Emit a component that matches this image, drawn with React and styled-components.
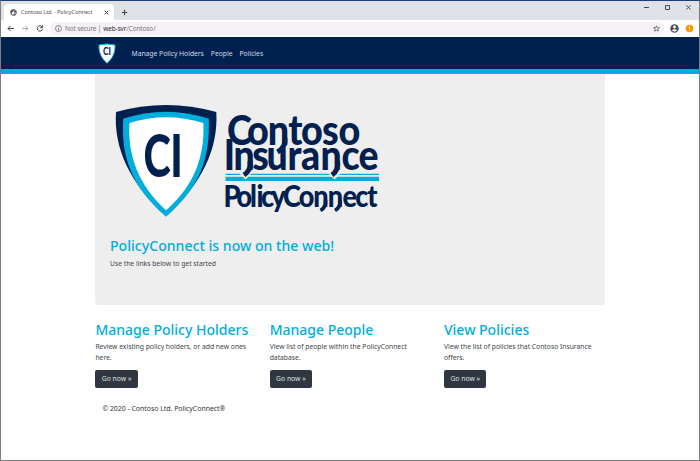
import React from 'react';
import styled, { createGlobalStyle } from 'styled-components';

const NAVY = '#00204f';
const CYAN = '#00addc';

const Global = createGlobalStyle`
  * { box-sizing: border-box; }
  body { margin: 0; background: #fff; font-family: "Noto Sans", "Open Sans", sans-serif; }
`;

const Window = styled.div`
  width: 700px;
  height: 461px;
  overflow: hidden;
  background: #fff;
  border: 1px solid #7d7d7d;
  border-top-color: #1d3e72;
`;

const TabStrip = styled.div`
  height: 19px;
  background: #dee1e6;
  display: flex;
  align-items: flex-end;
  padding-left: 3px;
`;

const Tab = styled.div`
  width: 110px;
  height: 16px;
  background: #fff;
  border-radius: 4px 4px 0 0;
  display: flex;
  align-items: center;
  padding: 0 5px 0 6px;
`;

const TabTitle = styled.span`
  flex: 1;
  margin-left: 4px;
  font-size: 5.6px;
  letter-spacing: -0.12px;
  line-height: 8px;
  color: #50545a;
  white-space: nowrap;
`;

const NewTab = styled.div`
  display: flex;
  align-items: center;
  height: 16px;
  margin-left: 7px;
`;

const WindowControls = styled.div`
  margin-left: auto;
  align-self: flex-start;
  display: flex;
  gap: 16px;
  padding: 3px 8px 0 0;
`;

const Toolbar = styled.div`
  height: 17px;
  display: flex;
  align-items: center;
  padding: 0 5px 0 6px;
`;

const NavIcons = styled.div`
  display: flex;
  gap: 7.5px;
  margin-right: 6px;
`;

const Address = styled.div`
  flex: 1;
  height: 13px;
  border-radius: 7px;
  background: #f5f1f5;
  display: flex;
  align-items: center;
  padding: 0 4px 0 5px;
  font-size: 6.4px;
  line-height: 10px;
  color: #77757a;
  white-space: nowrap;
`;

const Security = styled.span`
  margin-left: 3px;
  padding-right: 3px;
  border-right: 1px solid #b9b6ba;
  line-height: 8px;
  letter-spacing: -0.12px;
`;

const Url = styled.span`
  flex: 1;
  margin-left: 3px;
  letter-spacing: -0.07px;
`;

const Host = styled.span`
  color: #2b2b30;
`;

const ToolbarActions = styled.div`
  display: flex;
  gap: 6px;
  margin-left: 6px;
`;

const SiteHeader = styled.header`
  height: 37px;
  background: ${NAVY};
  border-bottom: 5px solid ${CYAN};
  display: flex;
  align-items: center;
  padding-left: 97px;
`;

const SiteNav = styled.nav`
  display: flex;
  gap: 7px;
  margin: 1px 0 0 15.5px;
`;

const NavLink = styled.a`
  color: #d5dbe5;
  font-size: 6.8px;
  line-height: 12px;
  letter-spacing: -0.03px;
  white-space: nowrap;
`;

const Container = styled.main`
  width: 510px;
  margin-left: 94px;
`;

const Hero = styled.section`
  height: 231px;
  background: #eee;
  border-radius: 0 0 3px 3px;
  padding: 28px 15px 0 15px;
`;

const HeroTitle = styled.h1`
  margin: 19px 0 0;
  font-size: 14.1px;
  line-height: 18px;
  font-weight: 500;
  color: ${CYAN};
  white-space: nowrap;
`;

const Body = styled.p`
  margin: 0;
  font-size: 6.8px;
  line-height: 11px;
  letter-spacing: -0.02px;
  color: #42464b;
  white-space: nowrap;
`;

const HeroBody = styled(Body)`
  margin-top: 3px;
`;

const Columns = styled.div`
  display: grid;
  grid-template-columns: 174.3px 174.3px 1fr;
  margin-top: 16px;
  padding-left: 0.4px;
`;

const CardTitle = styled.h2`
  margin: 0 0 2px;
  font-size: 14px;
  line-height: 18px;
  font-weight: 500;
  color: ${CYAN};
  white-space: nowrap;
`;

const Button = styled.button`
  display: block;
  width: 42.4px;
  height: 18px;
  margin-top: 7px;
  padding: 0;
  border: 0;
  border-radius: 2px;
  background: #303741;
  color: #dfe1e4;
  font-family: inherit;
  font-size: 6.8px;
  line-height: 18px;
`;

const Footer = styled.footer`
  margin: 15px 0 0 7.4px;
  font-size: 6.9px;
  line-height: 11px;
  color: #303338;
  white-space: nowrap;
`;

const LogoSvg = styled.svg`
  display: block;
  overflow: visible;
  margin-left: 2px;
`;

const Globe = () => (
  <svg width="7" height="7" viewBox="0 0 14 14">
    <circle cx="7" cy="7" r="6" fill="#fff" stroke="#50545a" strokeWidth="1.6" />
    <path d="M1 6 2 3 6 1 8 3 6 6 3 7 4 10 3 11ZM9 1 13 6 10 8 8 6ZM7 9h5l-3 4H7Z" fill="#50545a" />
  </svg>
);

const Line = ({ d, w = 7, h = 7, c = '#44484d', s = 1 }) => (
  <svg width={w} height={h} viewBox={`0 0 ${w} ${h}`} fill="none" stroke={c} strokeWidth={s}>
    <path d={d} />
  </svg>
);

const SmallShield = () => (
  <svg width="18" height="21" viewBox="0 0 18 21">
    <path d="M1 2Q9 0 17 2C17.4 10 14 16 9 20.3C4 16 .6 10 1 2Z" fill="#fff" stroke={CYAN} strokeWidth="1" />
    <text x="4.9" y="12.1" fontFamily="Lato" fontWeight="700" fontSize="10.8" textLength="8" lengthAdjust="spacingAndGlyphs" fill={NAVY}>CI</text>
  </svg>
);

/* A word of the wordmark: each letter is centred on its own x. */
const Word = ({ children, y, size, squeeze, centers }) => (
  <text
    transform={`scale(${squeeze} 1)`}
    x={centers.map((c) => (c / squeeze).toFixed(2)).join(' ')}
    y={y}
    fontSize={size}
    textAnchor="middle"
  >
    {children}
  </text>
);

const Logo = () => (
  <LogoSvg width="272" height="116" viewBox="112 102 272 116" fontFamily="Lato" fontWeight="900" fill={NAVY}>
    <path d="M116 112Q166 98 216.3 112C218.5 148 202 184 166 216C130 184 113.5 148 116 112Z" />
    <path d="M123.2 118.8Q166 104.5 208.8 118.8C210 155 202 186 166 216.7C130 186 121 155 123.2 118.8Z" fill={CYAN} />
    <path d="M129.4 123Q166 111.5 203.3 123C205 155 195 185 166 210.2C138 185 127.5 155 129.4 123Z" fill="#fff" />
    <Word y="177.3" size={59} squeeze={0.7} centers={[157, 176.5]}>CI</Word>
    <path d="M225.5 174.3H379" stroke={CYAN} strokeWidth="1.3" />
    <path d="M225.5 178.9H379" stroke={CYAN} strokeWidth="4.2" />
    <path d="M239 173 245.5 179.5 252 173M328 173 334.5 179.5 341 173" fill="#eee" />
    <Word y="144.8" size={42} squeeze={0.9} centers={[239.5, 258, 278.5, 295.5, 312, 330.5, 349.5]}>Contoso</Word>
    <Word y="169.7" size={42.5} squeeze={0.88} centers={[229.5, 244, 260.5, 277, 294.5, 310.5, 331, 350.5, 368.5]}>Insurance</Word>
    <Word y="206.8" size={29.5} squeeze={0.92} centers={[232, 244.3, 253.5, 260, 267.5, 278.5, 292, 306.5, 321, 335.5, 349.8, 361.8, 372.5]}>PolicyConnect</Word>
    <g fill="none" stroke={NAVY} strokeWidth="5">
      <path d="M285 138Q286 147 277.5 152" />
      <path d="M250 161Q251.5 170 244 175" />
      <path d="M337.5 161Q339 170 332 175" />
    </g>
    <g fill="none" stroke={NAVY} strokeWidth="3.7">
      <path d="M325.5 200Q326.5 207 320.5 210.5" />
      <path d="M340 200Q341 207 335 210.5" />
    </g>
  </LogoSvg>
);

const cards = [
  { title: 'Manage Policy Holders', lines: ['Review existing policy holders, or add new ones', 'here.'] },
  { title: 'Manage People', lines: ['View list of people within the PolicyConnect', 'database.'] },
  { title: 'View Policies', lines: ['View the list of policies that Contoso Insurance', 'offers.'] },
];

export default function App() {
  return (
    <Window>
      <Global />
      <TabStrip>
        <Tab>
          <Globe />
          <TabTitle>Contoso Ltd. - PolicyConnect</TabTitle>
          <Line w={5} h={5} d="M.7 .7 4.3 4.3M4.3 .7.7 4.3" />
        </Tab>
        <NewTab><Line d="M3.5 .8V6.2M.8 3.5H6.2" s={1.1} /></NewTab>
        <WindowControls>
          <Line w={5} d="M0 3.5H5" />
          <Line w={5} d="M.5 1.5H4.5V5.5H.5Z" />
          <Line w={5} d="M.3 1.2 4.7 5.6M4.7 1.2.3 5.6" s={0.9} />
        </WindowControls>
      </TabStrip>
      <Toolbar>
        <NavIcons>
          <Line d="M7 3.5H1M3.7 .8 1 3.5 3.7 6.2" />
          <Line d="M0 3.5H6M3.3 .8 6 3.5 3.3 6.2" c="#aaa" />
          <Line w={8} d="M6 1.7A2.7 2.7 0 1 0 6.5 4.2M6.6 .3V2.7H4.2" />
        </NavIcons>
        <Address>
          <svg width="7" height="7" viewBox="0 0 14 14" fill="none" stroke="#66646a" strokeWidth="1.5">
            <circle cx="7" cy="7" r="6" />
            <path d="M7 6v5M7 3v1.8" />
          </svg>
          <Security>Not secure</Security>
          <Url><Host>web-svr</Host>/Contoso/</Url>
          <Line d="M3.5 .8 4.3 2.7 6.4 2.8 4.8 4.2 5.3 6.2 3.5 5.1 1.7 6.2 2.2 4.2 .6 2.8 2.7 2.7Z" s={0.7} />
        </Address>
        <ToolbarActions>
          <svg width="9" height="9" viewBox="0 0 18 18">
            <circle cx="9" cy="9" r="8.5" fill="#4b5058" />
            <circle cx="9" cy="6" r="2.8" fill="#fff" />
            <path d="M3.5 13Q9 7.5 14.5 13Q9 17 3.5 13Z" fill="#fff" />
          </svg>
          <svg width="9" height="9" viewBox="0 0 18 18">
            <circle cx="9" cy="9" r="7.5" fill="#fb9800" />
            <path d="M9 5v5M9 11.5v2" stroke="#fff" strokeWidth="2" />
          </svg>
        </ToolbarActions>
      </Toolbar>
      <SiteHeader>
        <SmallShield />
        <SiteNav>
          <NavLink>Manage Policy Holders</NavLink>
          <NavLink>People</NavLink>
          <NavLink>Policies</NavLink>
        </SiteNav>
      </SiteHeader>
      <Container>
        <Hero>
          <Logo />
          <HeroTitle>PolicyConnect is now on the web!</HeroTitle>
          <HeroBody>Use the links below to get started</HeroBody>
        </Hero>
        <Columns>
          {cards.map((card) => (
            <section key={card.title}>
              <CardTitle>{card.title}</CardTitle>
              {card.lines.map((line) => <Body key={line}>{line}</Body>)}
              <Button>Go now »</Button>
            </section>
          ))}
        </Columns>
        <Footer>© 2020 - Contoso Ltd. PolicyConnect®</Footer>
      </Container>
    </Window>
  );
}
